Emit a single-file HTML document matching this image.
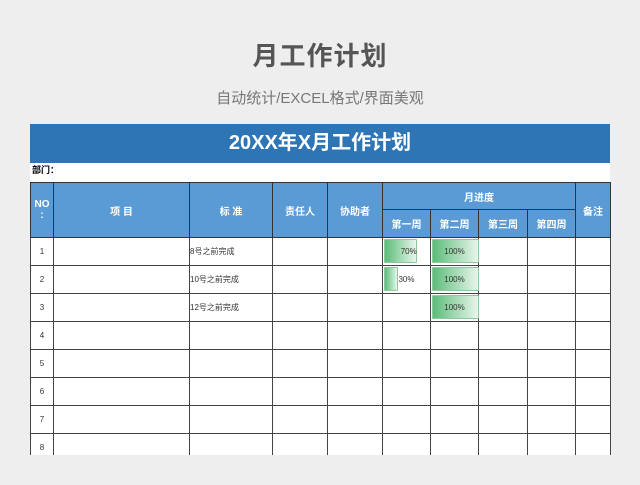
<!DOCTYPE html>
<html><head><meta charset="utf-8"><style>
body{margin:0;width:640px;height:485px;background:#eeeeee;font-family:"Liberation Sans","Noto Sans CJK SC",sans-serif;position:relative;overflow:hidden}
.t1{position:absolute;top:36px;width:640px;text-align:center;font-size:26px;color:#555;font-weight:bold;letter-spacing:1px}
.t2{position:absolute;top:87px;width:640px;text-align:center;font-size:15px;color:#777}
.ban{position:absolute;left:30px;top:124px;width:580px;height:39px;background:#2e75b6;color:#fff;font-weight:bold;font-size:20px;text-align:center;line-height:39px}
.dep{position:absolute;left:30px;top:163px;width:580px;height:19px;background:#fff;font-size:9px;font-weight:bold;line-height:15px;padding-left:2px;box-sizing:border-box}
table{position:absolute;left:30px;top:182px;border-collapse:collapse;table-layout:fixed;background:#fff}
td{border:1px solid #444;font-size:8px;padding:0;text-align:center;color:#333;position:relative}
th{border:1px solid #333;background:#5b9bd5;color:#fff;font-size:10px;font-weight:bold;padding:0}
.bar{position:absolute;left:1px;top:1px;height:24px;background:linear-gradient(90deg,#5dbd7a,#e8f5ec);border:1px solid #8cc99c;box-sizing:border-box;border-radius:1px}
.pct{position:relative;font-size:8px}
td.l{text-align:left}
</style></head><body>
<div class="t1">月工作计划</div>
<div class="t2">自动统计/EXCEL格式/界面美观</div>
<div class="ban">20XX年X月工作计划</div>
<div class="dep">部门：</div>
<table>
<colgroup><col style="width:23px"><col style="width:136px"><col style="width:83px"><col style="width:55px"><col style="width:55px"><col style="width:48px"><col style="width:48px"><col style="width:49px"><col style="width:48px"><col style="width:35px"></colgroup>
<tr style="height:27px"><th rowspan="2">NO<br>:</th><th rowspan="2">项 目</th><th rowspan="2">标 准</th><th rowspan="2">责任人</th><th rowspan="2">协助者</th><th colspan="4">月进度</th><th rowspan="2">备注</th></tr>
<tr style="height:28px"><th>第一周</th><th>第二周</th><th>第三周</th><th>第四周</th></tr>
<tr style="height:28px"><td>1</td><td></td><td class="l">8号之前完成</td><td></td><td></td><td><div class="bar" style="width:33px"></div><span class="pct">&nbsp;&nbsp;70%</span></td><td><div class="bar" style="width:47px"></div><span class="pct">100%</span></td><td></td><td></td><td></td></tr>
<tr style="height:28px"><td>2</td><td></td><td class="l">10号之前完成</td><td></td><td></td><td><div class="bar" style="width:14px"></div><span class="pct">30%</span></td><td><div class="bar" style="width:47px"></div><span class="pct">100%</span></td><td></td><td></td><td></td></tr>
<tr style="height:28px"><td>3</td><td></td><td class="l">12号之前完成</td><td></td><td></td><td></td><td><div class="bar" style="width:47px"></div><span class="pct">100%</span></td><td></td><td></td><td></td></tr>
<tr style="height:28px"><td>4</td><td></td><td></td><td></td><td></td><td></td><td></td><td></td><td></td><td></td></tr>
<tr style="height:28px"><td>5</td><td></td><td></td><td></td><td></td><td></td><td></td><td></td><td></td><td></td></tr>
<tr style="height:28px"><td>6</td><td></td><td></td><td></td><td></td><td></td><td></td><td></td><td></td><td></td></tr>
<tr style="height:28px"><td>7</td><td></td><td></td><td></td><td></td><td></td><td></td><td></td><td></td><td></td></tr>
<tr style="height:28px"><td>8</td><td></td><td></td><td></td><td></td><td></td><td></td><td></td><td></td><td></td></tr>
</table>
<div style="position:absolute;left:0;top:455px;width:640px;height:30px;background:#eeeeee"></div>
</body></html>
